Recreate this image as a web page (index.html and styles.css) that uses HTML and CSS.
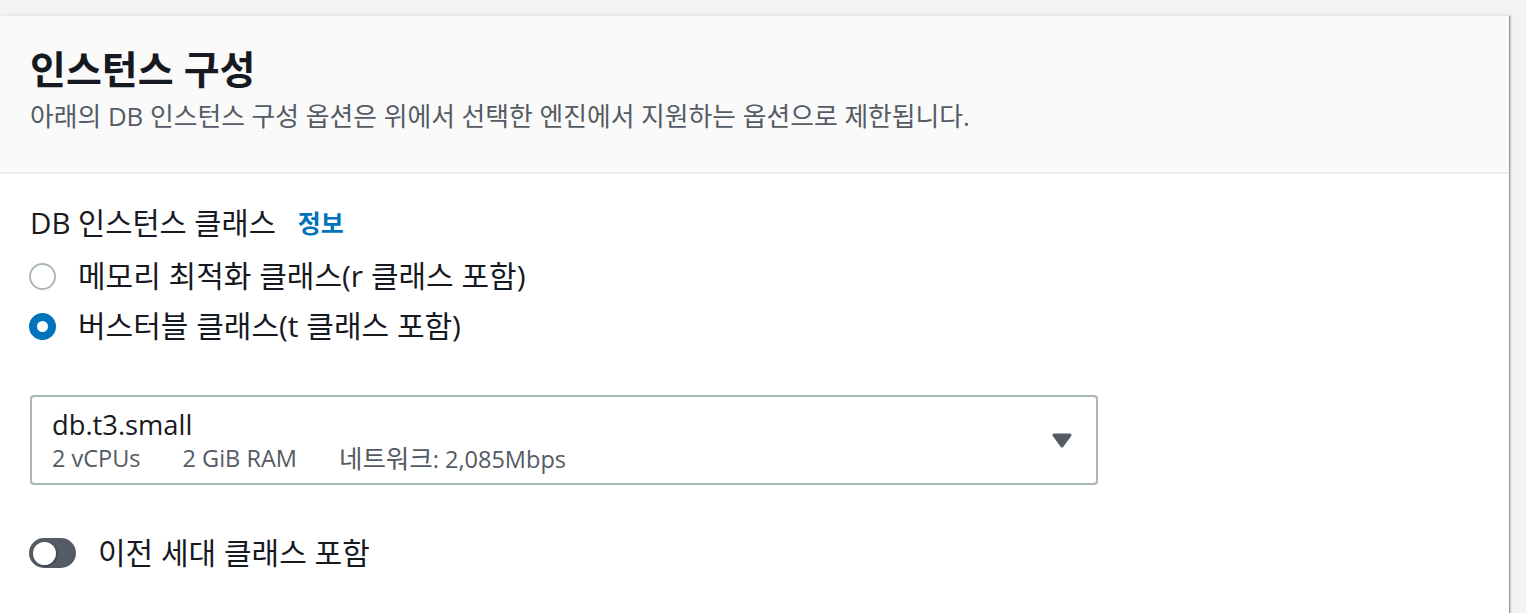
FILE: index.html
```html
<!DOCTYPE html>
<html lang="ko">
<head>
<meta charset="utf-8">
<title>인스턴스 구성</title>
<link rel="stylesheet" href="styles.css">
</head>
<body>
<div class="page">
  <section class="card">
    <header class="card-header">
      <h2 class="title">인스턴스 구성</h2>
      <p class="desc">아래의 DB 인스턴스 구성 옵션은 위에서 선택한 엔진에서 지원하는 옵션으로 제한됩니다.</p>
    </header>
    <div class="card-body">
      <div class="field-label">DB 인스턴스 클래스<a class="info" href="#">정보</a></div>
      <div class="radio-row first">
        <span class="radio"></span>
        <span class="radio-text">메모리 최적화 클래스(r 클래스 포함)</span>
      </div>
      <div class="radio-row">
        <span class="radio checked"></span>
        <span class="radio-text">버스터블 클래스(t 클래스 포함)</span>
      </div>
      <div class="select">
        <div class="select-content">
          <div class="select-value">db.t3.small</div>
          <div class="select-tags">
            <span>2 vCPUs</span>
            <span>2 GiB RAM</span>
            <span><span class="tag-ko">네트워크</span>: 2,085Mbps</span>
          </div>
        </div>
        <svg class="caret" width="20" height="15" viewBox="0 0 20 15" aria-hidden="true">
          <path d="M2 2 L18 2 L10 13 Z" fill="#545b64" stroke="#545b64" stroke-width="3" stroke-linejoin="round"/>
        </svg>
      </div>
      <div class="toggle-row">
        <span class="toggle"><span class="knob"></span></span>
        <span class="toggle-text">이전 세대 클래스 포함</span>
      </div>
    </div>
  </section>
</div>
</body>
</html>
```

FILE: styles.css
```css
html, body {
  margin: 0;
  padding: 0;
}
body {
  background: #f2f3f3;
  font-family: "Open Sans", "Noto Sans CJK KR", sans-serif;
  color: #16191f;
  overflow: hidden;
}
.page {
  padding-top: 15px;
  height: 598px;
}
.card {
  width: 1509px;
  height: 620px;
  background: #ffffff;
  border-top: 1px solid #eaeded;
  box-shadow: 1px 1px 1px rgba(0, 28, 36, 0.3), 2px 0 2px rgba(0, 28, 36, 0.15);
}
.card-header {
  background: #fafafa;
  border-bottom: 2px solid #eaeded;
  padding: 31px 30px 0 30px;
  height: 125px;
}
.title {
  margin: 0;
  font-size: 39px;
  line-height: 44px;
  font-weight: 700;
  color: #16191f;
}
.desc {
  margin: 9px 0 0 0;
  font-size: 25.8px;
  line-height: 32px;
  color: #545b64;
}
.card-body {
  padding: 29px 30px 0 30px;
}
.field-label {
  font-size: 29.5px;
  line-height: 40px;
  display: flex;
  align-items: center;
}
.info {
  margin-left: 22px;
  font-size: 25px;
  font-weight: 700;
  color: #0073bb;
  text-decoration: none;
}
.radio-row {
  display: flex;
  align-items: center;
  height: 50px;
}
.radio-row.first {
  margin-top: 8px;
}
.radio {
  box-sizing: border-box;
  width: 27px;
  height: 27px;
  border-radius: 50%;
  border: 2px solid #aab7b8;
  background: #ffffff;
  margin-left: -1px;
  flex: none;
}
.radio.checked {
  border: 8.5px solid #0073bb;
}
.radio-text {
  margin-left: 22px;
  font-size: 30px;
  line-height: 40px;
}
.select {
  margin-top: 44px;
  box-sizing: border-box;
  width: 1068px;
  height: 90px;
  border: 2px solid #aab7b8;
  border-radius: 4px;
  display: flex;
  align-items: center;
  justify-content: space-between;
  padding: 0 24px 0 20px;
}
.select-content {
  display: flex;
  flex-direction: column;
}
.select-value {
  font-size: 27.3px;
  line-height: 36px;
  color: #16191f;
}
.select-tags {
  display: flex;
  gap: 42px;
  font-size: 23.5px;
  line-height: 30px;
  color: #545b64;
}
.tag-ko {
  font-size: 25.5px;
}
.caret {
  display: block;
  flex: none;
}
.toggle-row {
  margin-top: 48px;
  display: flex;
  align-items: center;
  height: 40px;
}
.toggle {
  width: 47px;
  height: 30px;
  border-radius: 15px;
  background: #545b64;
  display: flex;
  align-items: center;
  padding-left: 4px;
  box-sizing: border-box;
  margin-left: -1px;
  flex: none;
}
.knob {
  width: 23px;
  height: 23px;
  border-radius: 50%;
  background: #ffffff;
  box-shadow: 1px 1px 2px rgba(0, 0, 0, 0.35);
}
.toggle-text {
  margin-left: 22px;
  font-size: 30px;
  line-height: 40px;
}
```
